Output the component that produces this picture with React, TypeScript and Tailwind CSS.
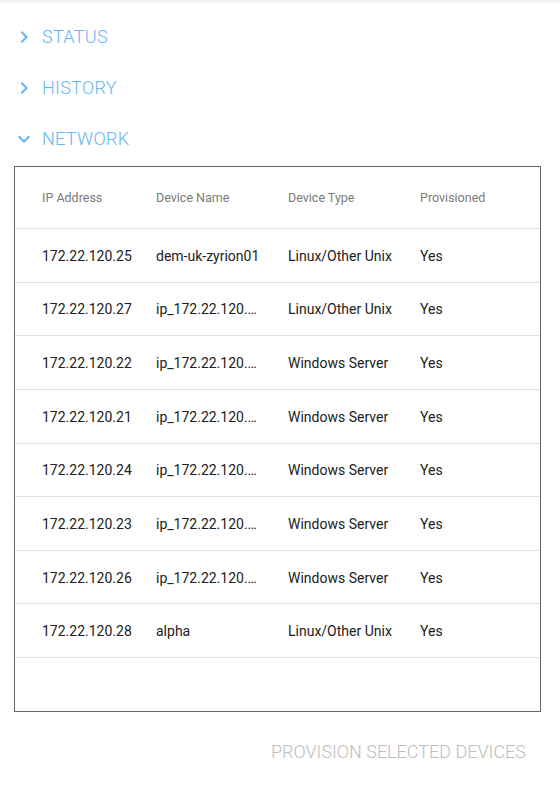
import React from "react";

interface Device {
    ip: string;
    name: string;
    type: string;
    provisioned: string;
}

const devices: Device[] = [
    {ip: "172.22.120.25", name: "dem-uk-zyrion01", type: "Linux/Other Unix", provisioned: "Yes"},
    {ip: "172.22.120.27", name: "ip_172.22.120.27", type: "Linux/Other Unix", provisioned: "Yes"},
    {ip: "172.22.120.22", name: "ip_172.22.120.22", type: "Windows Server", provisioned: "Yes"},
    {ip: "172.22.120.21", name: "ip_172.22.120.21", type: "Windows Server", provisioned: "Yes"},
    {ip: "172.22.120.24", name: "ip_172.22.120.24", type: "Windows Server", provisioned: "Yes"},
    {ip: "172.22.120.23", name: "ip_172.22.120.23", type: "Windows Server", provisioned: "Yes"},
    {ip: "172.22.120.26", name: "ip_172.22.120.26", type: "Windows Server", provisioned: "Yes"},
    {ip: "172.22.120.28", name: "alpha", type: "Linux/Other Unix", provisioned: "Yes"},
];

const ChevronRight = () => (
    <svg width="24" height="24" viewBox="0 0 24 24" fill="#64b5f6">
        <path d="M10 6 8.59 7.41 13.17 12l-4.58 4.59L10 18l6-6z"/>
    </svg>
);

const ChevronDown = () => (
    <svg width="24" height="24" viewBox="0 0 24 24" fill="#64b5f6">
        <path d="M16.59 8.59 12 13.17 7.41 8.59 6 10l6 6 6-6z"/>
    </svg>
);

const Section: React.FC<{ title: string, open?: boolean }> = ({title, open}) => (
    <div className="flex items-center h-[51px] pl-[12px] gap-[6px]">
        {open ? <ChevronDown/> : <ChevronRight/>}
        <span className="text-[18px] font-light text-[#64b5f6] tracking-[0.3px]">{title}</span>
    </div>
);

const cols = "grid grid-cols-[141px_132px_132px_1fr] items-center";

export default function App() {
    return (
        <div className="w-[560px] h-[786px] bg-white overflow-hidden" style={{fontFamily: "Roboto, 'Liberation Sans', sans-serif"}}>
            <div className="h-[4px] bg-gradient-to-b from-[#ececec] to-white"/>
            <div className="pt-[7px]">
                <Section title="STATUS"/>
                <Section title="HISTORY"/>
                <Section title="NETWORK" open/>
            </div>
            <div className="mt-[2px] ml-[14px] w-[527px] h-[546px] border border-[#666666]">
                <div className={`${cols} h-[62px] pt-[1px] border-b border-[#e0e0e0] text-[12.5px] text-[#7a7a7a]`}>
                    <span className="pl-[27px]">IP Address</span>
                    <span>Device Name</span>
                    <span>Device Type</span>
                    <span>Provisioned</span>
                </div>
                {devices.map((d, i) => (
                    <div key={i} className={`${cols} h-[53.625px] pt-[2px] border-b border-[#e0e0e0] text-[14px] text-[#212121]`}>
                        <span className="pl-[27px]">{d.ip}</span>
                        <span className="pr-[28px] truncate">{d.name}</span>
                        <span>{d.type}</span>
                        <span>{d.provisioned}</span>
                    </div>
                ))}
            </div>
            <div className="flex justify-end pr-[34px] pt-[29px]">
                <button className="text-[18px] font-light text-[#bdbdbd] leading-[22px]">PROVISION SELECTED DEVICES</button>
            </div>
        </div>
    );
}
